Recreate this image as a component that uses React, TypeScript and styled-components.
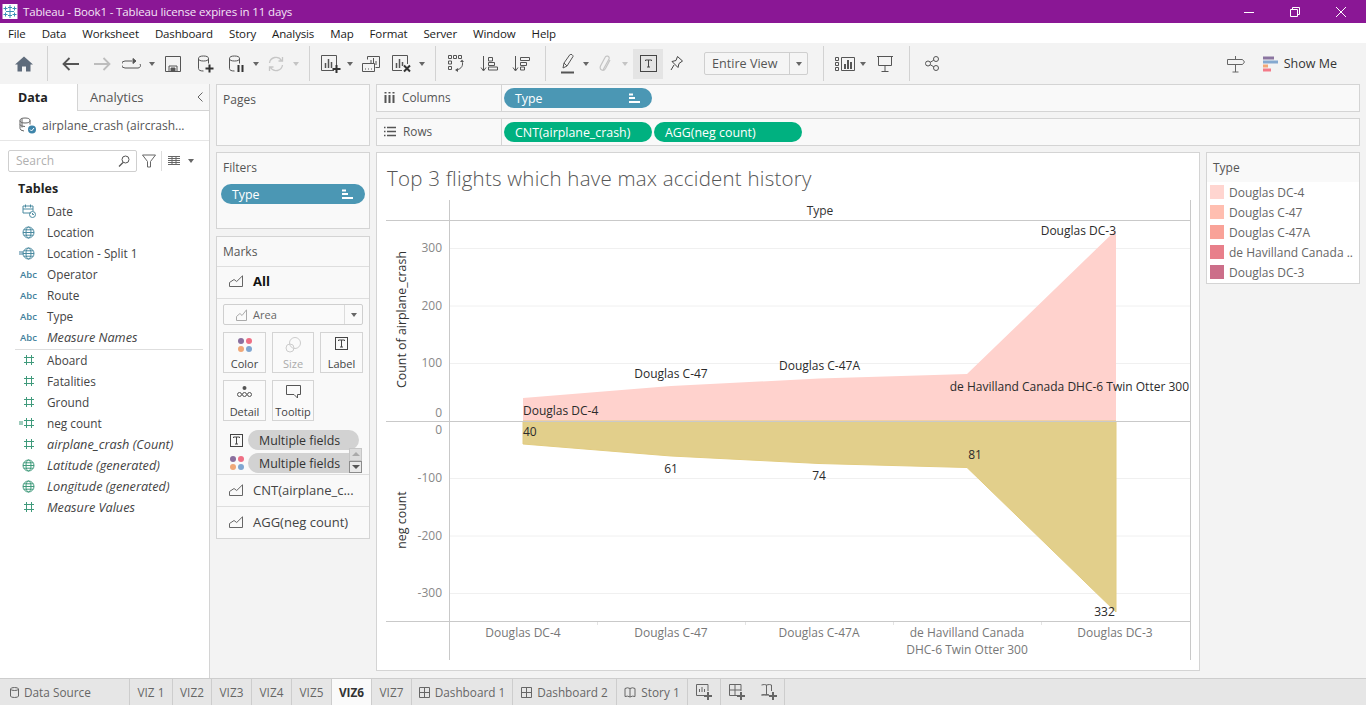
import React from 'react';
import styled, { createGlobalStyle } from 'styled-components';

const FONT = '"Open Sans", "Noto Sans", sans-serif';

const Global = createGlobalStyle`
  html, body { margin: 0; padding: 0; background: #f3f3f3; overflow: hidden; }
  * { box-sizing: border-box; }
  body { font-family: ${FONT}; font-size: 12px; color: #333; }
`;

const Page = styled.div`
  width: 1366px; height: 705px; display: flex; flex-direction: column; overflow: hidden;
`;
const TitleBar = styled.div`
  height: 23px; flex: none; background: #8a1795; color: #f4e6f6; display: flex; align-items: center;
  padding-left: 2px; font-size: 11.5px; letter-spacing: -0.15px;
`;
const TitleText = styled.span` margin-left: 5px; `;
const WinControls = styled.div` margin-left: auto; display: flex; align-items: center; padding-right: 2px; `;
const WinBtn = styled.span`
  width: 46px; height: 23px; display: flex; align-items: center; justify-content: center; color: #fff;
`;
const MenuBar = styled.div`
  height: 20px; flex: none; background: #fff; display: flex; align-items: center; gap: 16px; padding-left: 8px;
  font-size: 11.5px; color: #1a1a1a; letter-spacing: -0.14px;
`;
const Toolbar = styled.div`
  height: 41px; flex: none; background: #f3f3f3; display: flex; align-items: center; padding-left: 8px; padding-right: 29px;
`;
const Tool = styled.span<{ $w: number; $active?: boolean; $ml?: number }>`
  width: ${p => p.$w}px; height: 30px; flex: none; display: flex; align-items: center; justify-content: center;
  margin-left: ${p => p.$ml ?? 0}px; background: ${p => (p.$active ? '#e4e4e4' : 'transparent')};
`;
const Sep = styled.span<{ $l: number; $r: number }>`
  width: 1px; height: 35px; flex: none; background: #d2d2d2; margin: 0 ${p => p.$r}px 0 ${p => p.$l}px;
`;
const Caret = styled.span<{ $light?: boolean }>`
  width: 0; height: 0; border-left: 3.5px solid transparent; border-right: 3.5px solid transparent;
  border-top: 4px solid ${p => (p.$light ? '#c4c4c4' : '#666')};
`;
const FitSelect = styled.div`
  width: 104px; height: 23px; margin-left: 13px; flex: none; display: flex; align-items: center;
  border: 1px solid #cfcfcf; border-radius: 2px; background: #f5f5f5; color: #555; font-size: 12.6px;
`;
const FitLabel = styled.span` flex: 1; padding-left: 7px; white-space: nowrap; `;
const FitArrow = styled.span`
  width: 18px; height: 100%; border-left: 1px solid #cfcfcf; display: flex; align-items: center; justify-content: center;
`;
const ShowMe = styled.div`
  margin-left: 18px; display: flex; align-items: center; gap: 6px; color: #333; font-size: 12.5px;
`;
const Spring = styled.span` margin-left: auto; display: flex; `;

const Main = styled.div` flex: 1; min-height: 0; display: flex; background: #f3f3f3; `;
const DataPane = styled.aside`
  width: 210px; flex: none; background: #fff; border-right: 1px solid #d4d4d4; display: flex; flex-direction: column;
`;
const PaneTabs = styled.div` height: 27px; display: flex; flex: none; `;
const PaneTab = styled.div<{ $active?: boolean }>`
  display: flex; align-items: center; font-size: 13px;
  ${p => p.$active
    ? 'width: 77px; padding-left: 18px; font-weight: 700; font-size: 12.5px; color: #222; background: #fff;'
    : 'flex: 1; padding-left: 12px; color: #555; background: #f7f7f7; border-left: 1px solid #d4d4d4; border-bottom: 1px solid #d4d4d4;'}
`;
const Collapse = styled.span` margin-left: auto; margin-right: 6px; display: flex; `;
const SourceRow = styled.div`
  height: 30px; flex: none; display: flex; align-items: center; padding-left: 19px; gap: 5px; color: #555; font-size: 12px;
  border-bottom: 1px solid #e6e6e6; white-space: nowrap;
`;
const SearchRow = styled.div` height: 21px; margin-top: 9px; padding-left: 8px; display: flex; align-items: center; flex: none; `;
const SearchBox = styled.div`
  width: 129px; height: 22px; border: 1px solid #cfcfcf; border-radius: 2px; display: flex; align-items: center;
  justify-content: space-between; padding: 0 6px 0 7px; color: #b0b0b0; font-size: 12px;
`;
const SearchTool = styled.span<{ $w: number; $border?: boolean }>`
  width: ${p => p.$w}px; height: 20px; display: flex; align-items: center; justify-content: center;
  ${p => (p.$border ? 'border-left: 1px solid #ddd;' : '')}
`;
const TablesHead = styled.div` margin: 9px 0 4px 18px; height: 17px; line-height: 17px; font-weight: 700; font-size: 12.5px; color: #222; `;
const FieldRow = styled.div<{ $italic?: boolean }>`
  height: 21px; display: flex; align-items: center; flex: none; padding: 0 0 1px 18px; color: #444; white-space: nowrap;
  font-size: ${p => (p.$italic ? '12.7px' : '11.8px')};
  font-style: ${p => (p.$italic ? 'italic' : 'normal')};
`;
const FieldIconSlot = styled.span<{ $color: string }>`
  width: 21px; margin-right: 8px; display: flex; align-items: center; justify-content: center; color: ${p => p.$color};
  font-size: 9.5px; font-style: normal; font-weight: 600; position: relative;
`;
const CalcMark = styled.span`
  position: absolute; left: 1px; top: 50%; transform: translateY(-50%); width: 4px; height: 3px;
  border-top: 1px solid currentColor; border-bottom: 1px solid currentColor;
`;
const FieldDivider = styled.div` height: 1px; margin: 1px 6px 0 15px; background: #dedede; flex: none; `;

const CardCol = styled.div` width: 154px; margin-left: 6px; flex: none; display: flex; flex-direction: column; `;
const Card = styled.section<{ $h: number; $mt?: number }>`
  height: ${p => p.$h}px; margin-top: ${p => p.$mt ?? 0}px; background: #f9f9f9; border: 1px solid #d4d4d4; flex: none; position: relative;
`;
const CardTitle = styled.div` height: 29px; line-height: 30px; padding-left: 6px; color: #555; font-size: 12px; `;
const Pill = styled.div<{ $bg: string; $w?: number; $color?: string }>`
  width: ${p => p.$w ?? 148}px; height: 20px; border-radius: 10px; background: ${p => p.$bg}; color: ${p => p.$color ?? '#fff'};
  display: flex; align-items: center; padding: 0 12px 0 11px; font-size: 12.4px; font-weight: 500; flex: none; white-space: nowrap;
`;
const PillSort = styled.span` margin-left: auto; display: flex; `;
const FilterPill = styled.div` margin: 2px 0 0 4px; `;
const MarksRow = styled.div<{ $h: number; $bold?: boolean }>`
  height: ${p => p.$h}px; display: flex; align-items: center; padding: 0 0 ${p => (p.$bold ? 3 : 2)}px 12px; border-top: 1px solid #dedede;
  font-size: 13px; color: ${p => (p.$bold ? '#111' : '#444')}; font-weight: ${p => (p.$bold ? 700 : 400)}; white-space: nowrap;
`;
const MarksRule = styled.div` height: 1px; background: #dedede; `;
const MarkIconSlot = styled.span` width: 24px; display: flex; `;
const MarkSelect = styled.div`
  margin: 5px 6px 0; height: 21px; border: 1px solid #cfcfcf; border-radius: 2px; background: #fafafa; display: flex; align-items: center;
  color: #666; font-size: 11px;
`;
const MarkSelectLabel = styled.span` flex: 1; display: flex; align-items: center; gap: 6px; padding-left: 12px; `;
const MarkSelectArrow = styled.span`
  width: 18px; height: 100%; border-left: 1px solid #dcdcdc; display: flex; align-items: center; justify-content: center;
`;
const MarkGrid = styled.div`
  display: grid; grid-template-columns: 43px 42px 43px; grid-auto-rows: 41px; column-gap: 6px; row-gap: 7px; margin: 7px 6px 0;
`;
const MarkBtn = styled.div<{ $off?: boolean }>`
  border: 1px solid #d4d4d4; background: #fafafa; display: flex; flex-direction: column; align-items: center; justify-content: space-between;
  padding: 4px 0 1px; font-size: 11px; color: ${p => (p.$off ? '#aaa' : '#444')};
`;
const EncList = styled.div` position: relative; height: 44px; margin-top: 9px; overflow: hidden; display: flex; flex-direction: column; gap: 3px; `;
const EncRow = styled.div` display: flex; align-items: center; height: 20px; flex: none; padding-left: 11px; gap: 3px; `;
const EncIcon = styled.span` width: 17px; display: flex; justify-content: center; `;
const Scroller = styled.div`
  position: absolute; right: 7px; top: 18px; width: 13px; height: 25px; display: flex; flex-direction: column;
`;
const ScrollBtn = styled.span<{ $on?: boolean }>`
  flex: 1; display: flex; align-items: center; justify-content: center;
  background: ${p => (p.$on ? '#e9e9e9' : '#dcdcdc')}; border: 1px solid ${p => (p.$on ? '#8c8c8c' : '#c6c6c6')};
`;
const ScrollUp = styled.span`
  width: 0; height: 0; border-left: 4px solid transparent; border-right: 4px solid transparent; border-bottom: 4px solid #aaa;
`;
const ScrollDown = styled.span`
  width: 0; height: 0; border-left: 4px solid transparent; border-right: 4px solid transparent; border-top: 4px solid #555;
`;

const WorkArea = styled.div` flex: 1; margin: 0 6px; display: flex; flex-direction: column; min-width: 0; `;
const Shelf = styled.div<{ $mt?: number }>`
  height: 28px; margin-top: ${p => p.$mt ?? 0}px; flex: none; display: flex; background: #f9f9f9; border: 1px solid #d4d4d4;
`;
const ShelfLabel = styled.div`
  width: 125px; flex: none; display: flex; align-items: center; gap: 7px; padding: 0 0 2px 7px; border-right: 1px solid #d4d4d4;
  color: #555; font-size: 11.8px;
`;
const ShelfPills = styled.div` display: flex; align-items: center; gap: 2px; padding-left: 2px; `;
const ViewRow = styled.div` display: flex; gap: 6px; margin-top: 6px; `;
const VizPanel = styled.section`
  width: 824px; height: 519px; flex: none; background: #fff; border: 1px solid #d4d4d4; display: flex; flex-direction: column;
`;
const VizTitle = styled.h1`
  margin: 0; height: 37px; flex: none; padding: 12px 0 0 10px; font-weight: 300; font-size: 20.5px; letter-spacing: 0.22px; line-height: 26px; color: #555; white-space: nowrap;
`;
const ChartSvg = styled.svg` display: block; flex: none; `;
const Legend = styled.section`
  width: 154px; height: 132px; flex: none; border: 1px solid #d4d4d4; background: #fff;
`;
const LegendHead = styled.div` height: 29px; background: #f9f9f9; line-height: 30px; padding-left: 6px; color: #555; font-size: 12px; `;
const LegendRow = styled.div` height: 20px; display: flex; align-items: center; padding-left: 3px; color: #666; font-size: 12px; gap: 5px; white-space: nowrap; overflow: hidden; `;
const Swatch = styled.span<{ $c: string }>` width: 14px; height: 14px; flex: none; background: ${p => p.$c}; `;

const TabBar = styled.div`
  height: 27px; flex: none; background: #e6e6e6; border-top: 1px solid #cdcdcd; display: flex; align-items: stretch;
`;
const SheetTab = styled.div<{ $w: number; $active?: boolean; $noBorder?: boolean; $left?: boolean }>`
  width: ${p => p.$w}px; flex: none; display: flex; align-items: center; gap: 5px; font-size: 11.8px; white-space: nowrap;
  justify-content: ${p => (p.$left ? 'flex-start' : 'center')}; padding-left: ${p => (p.$left ? '10px' : '0')};
  border-right: ${p => (p.$noBorder ? 'none' : '1px solid #cdcdcd')};
  background: ${p => (p.$active ? '#fafafa' : 'transparent')}; color: ${p => (p.$active ? '#333' : '#666')};
  font-weight: ${p => (p.$active ? 700 : 400)};
`;

const AxisText = styled.text<{ $c?: string; $size?: number }>`
  font-family: ${FONT}; font-size: ${p => p.$size ?? 12}px; fill: ${p => p.$c ?? '#888'};
`;
const MarkText = styled.text`
  font-family: ${FONT}; font-size: 12px; fill: #2b2b2b;
`;

type SvgP = { w: number; h: number; children: React.ReactNode; color?: string };
const Ico = ({ w, h, children, color = '#555' }: SvgP) => (
  <svg width={w} height={h} viewBox={`0 0 ${w} ${h}`} fill="none" stroke={color} strokeWidth="1" style={{ display: 'block', flex: 'none' }}>
    {children}
  </svg>
);
const Plus = ({ x, y, c = '#333' }: { x: number; y: number; c?: string }) => (
  <path d={`M${x - 4} ${y}h8M${x} ${y - 4}v8`} stroke={c} strokeWidth="2" />
);
const Cyl = () => (
  <>
    <ellipse cx="6.5" cy="3.5" rx="5" ry="2.5" />
    <path d="M1.5 3.5v10q0 2.500 5 2.500M11.500 3.500v5" />
  </>
);

const LogoIcon = () => (
  <svg width="16" height="15" viewBox="0 0 15 15" style={{ display: 'block' }}>
    <rect width="15" height="15" fill="#fff" />
    <g stroke="#3a8fb5" strokeWidth="1">
      <path d="M7.500 1v13M3.500 7.500h8M5.500 3.500h4M5.500 11.500h4M1 4.500h4M10 4.500h4M1 10.500h4M10 10.500h4M3 2.500v4M12 2.500v4M3 8.500v4M12 8.500v4" />
    </g>
  </svg>
);
const AreaIcon = ({ c = '#666', w = 14 }: { c?: string; w?: number }) => (
  <Ico w={w} h={12} color={c}><path d={`M0.500 11.500V7.500L${w * 0.36} 4.500L${w * 0.55} 6.500L${w - 0.5} 0.800V11.500Z`} /></Ico>
);
const Hash = () => (
  <Ico w={12} h={12} color="#3f9a7b"><path d="M3.500 1v10M8.500 1v10M1 3.500h10M1 8.500h10" /></Ico>
);
const Globe = ({ c = '#4a8aa0' }: { c?: string }) => (
  <Ico w={13} h={13} color={c}>
    <circle cx="6.500" cy="6.500" r="5.500" />
    <ellipse cx="6.500" cy="6.500" rx="2.500" ry="5.500" />
    <path d="M1 6.500h11M1.800 3.800h9.400M1.800 9.200h9.400" />
  </Ico>
);
const SortBars = () => (
  <Ico w={11} h={10} color="#fff"><path d="M0 1.500h4M0 5h6" strokeWidth="2" /><path d="M0 9h11" strokeWidth="2" /></Ico>
);
const ColorDots = () => (
  <Ico w={16} h={16} color="none">
    <circle cx="4" cy="4" r="3" fill="#8a6f9e" /><circle cx="12" cy="4" r="3" fill="#ef6f84" />
    <circle cx="4" cy="12" r="3" fill="#f0a878" /><circle cx="12" cy="12" r="3" fill="#7fa6d1" />
  </Ico>
);
const TBox = ({ s = 14 }: { s?: number }) => (
  <Ico w={s} h={s} color="#444">
    <rect x="0.500" y="0.500" width={s - 1} height={s - 1} />
    <path d={`M${s / 2 - 3} ${s / 2 - 2.500}v-1h6v1M${s / 2} ${s / 2 - 3.500}v7M${s / 2 - 1.500} ${s / 2 + 3.500}h3`} />
  </Ico>
);

const fieldsA: [string, string][] = [['Date', 'date'], ['Location', 'globe'], ['Location - Split 1', 'globeCalc'], ['Operator', 'abc'], ['Route', 'abc'], ['Type', 'abc'], ['Measure Names', 'abcI']];
const fieldsB: [string, string][] = [['Aboard', 'hash'], ['Fatalities', 'hash'], ['Ground', 'hash'], ['neg count', 'hashCalc'], ['airplane_crash (Count)', 'hashI'], ['Latitude (generated)', 'globeI'], ['Longitude (generated)', 'globeI'], ['Measure Values', 'hashI']];

const FieldLine = ({ name, kind }: { name: string; kind: string }) => {
  const italic = kind.endsWith('I');
  const green = kind.startsWith('hash') || kind === 'globeI';
  const calc = kind.endsWith('Calc');
  let icon: React.ReactNode = 'Abc';
  if (kind === 'date') icon = (
    <Ico w={14} h={14} color="#4a8aa0">
      <path d="M9 9H1V2h10v5M1 5h10M3.500 0.500v3M8.500 0.500v3" /><circle cx="10.500" cy="10.500" r="3" /><path d="M10.500 9v1.500h1.500" />
    </Ico>
  );
  if (kind.startsWith('globe')) icon = <Globe c={green ? '#3f9a7b' : '#4a8aa0'} />;
  if (kind.startsWith('hash')) icon = <Hash />;
  return (
    <FieldRow $italic={italic}>
      <FieldIconSlot $color={green ? '#3f9a7b' : '#3f7f9c'}>{calc && <CalcMark />}{icon}</FieldIconSlot>
      {name}
    </FieldRow>
  );
};

const ticks: [string, number][] = [['300', 248], ['200', 306], ['100', 363], ['0', 412.5], ['0', 430], ['-100', 478], ['-200', 536], ['-300', 593]];
const grid = [248.5, 306, 363.5, 478.5, 536, 593.5];

const Chart = () => (
  <ChartSvg width={822} height={480} viewBox="377 190 822 480">
    {grid.map(y => <line key={y} x1={450} x2={1190} y1={y} y2={y} stroke="#f0f0f0" />)}
    <polygon points="523,398 671,386 819,378.500 967,374 1116,230 1116,421 523,421" fill="#ffd2cd" />
    <polygon points="523,421 1116,421 1116,612 967,467.500 819,463.500 671,456 523,444" fill="#e2cf8b" stroke="#e2cc80" />
    <path d="M386 220.500H1190.500M386 421.500H1190.500M386 621.500H1190.500M449.500 200V660M1190.500 200V660" stroke="#c9c9c9" />
    <path d="M597.500 622v3M745.500 622v3M893.500 622v3M1041.500 622v3" stroke="#e4e4e4" />
    <AxisText x={820} y={215} textAnchor="middle" $c="#333">Type</AxisText>
    {ticks.map(([t, y], i) => <AxisText key={i} x={442} y={y + 4} textAnchor="end">{t}</AxisText>)}
    <AxisText x={0} y={0} transform="translate(406 319.500) rotate(-90)" textAnchor="middle" $c="#333" $size={12.4}>Count of airplane_crash</AxisText>
    <AxisText x={0} y={0} transform="translate(406 520) rotate(-90)" textAnchor="middle" $c="#333" $size={12.4}>neg count</AxisText>
    <AxisText x={523} y={637} textAnchor="middle" $c="#777">Douglas DC-4</AxisText>
    <AxisText x={671} y={637} textAnchor="middle" $c="#777">Douglas C-47</AxisText>
    <AxisText x={819} y={637} textAnchor="middle" $c="#777">Douglas C-47A</AxisText>
    <AxisText x={967} y={637} textAnchor="middle" $c="#777">de Havilland Canada</AxisText>
    <AxisText x={967} y={654} textAnchor="middle" $c="#777">DHC-6 Twin Otter 300</AxisText>
    <AxisText x={1115} y={637} textAnchor="middle" $c="#777">Douglas DC-3</AxisText>
    <MarkText x={1116} y={235} textAnchor="end">Douglas DC-3</MarkText>
    <MarkText x={671} y={378} textAnchor="middle">Douglas C-47</MarkText>
    <MarkText x={819.500} y={370} textAnchor="middle">Douglas C-47A</MarkText>
    <MarkText x={1189} y={391} textAnchor="end">de Havilland Canada DHC-6 Twin Otter 300</MarkText>
    <MarkText x={523} y={415}>Douglas DC-4</MarkText>
    <MarkText x={523} y={436}>40</MarkText>
    <MarkText x={671} y={473} textAnchor="middle">61</MarkText>
    <MarkText x={819} y={480} textAnchor="middle">74</MarkText>
    <MarkText x={975} y={459} textAnchor="middle">81</MarkText>
    <MarkText x={1104.500} y={616} textAnchor="middle">332</MarkText>
  </ChartSvg>
);

const legend: [string, string][] = [['#ffd5d0', 'Douglas DC-4'], ['#ffbeb0', 'Douglas C-47'], ['#f9a298', 'Douglas C-47A'], ['#e87f8a', 'de Havilland Canada ..'], ['#cc6e89', 'Douglas DC-3']];

export default function App() {
  return (
    <Page>
      <Global />
      <TitleBar>
        <LogoIcon />
        <TitleText>Tableau - Book1 - Tableau license expires in 11 days</TitleText>
        <WinControls>
          <WinBtn><Ico w={10} h={10} color="#fff"><path d="M0 5.500h10" /></Ico></WinBtn>
          <WinBtn><Ico w={10} h={10} color="#fff"><path d="M0.500 2.500h7v7h-7zM2.500 2.500v-2h7v7h-2" /></Ico></WinBtn>
          <WinBtn><Ico w={10} h={10} color="#fff"><path d="M0 0l10 10M10 0L0 10" /></Ico></WinBtn>
        </WinControls>
      </TitleBar>
      <MenuBar>
        {['File', 'Data', 'Worksheet', 'Dashboard', 'Story', 'Analysis', 'Map', 'Format', 'Server', 'Window', 'Help'].map(m => <span key={m}>{m}</span>)}
      </MenuBar>
      <Toolbar>
        <Tool $w={32}><Ico w={18} h={16} color="none"><path d="M9 0.500L18 8.500H15.500V15.500H11V10.500H7V15.500H2.500V8.500H0Z" fill="#5e6b7b" /></Ico></Tool>
        <Sep $l={7} $r={7} />
        <Tool $w={30}><Ico w={17} h={14} color="#555"><path d="M17 7H1.500M7.500 1L1.500 7L7.500 13" strokeWidth="1.800" /></Ico></Tool>
        <Tool $w={34}><Ico w={17} h={14} color="#bdbdbd"><path d="M0 7H15.500M9.500 1L15.500 7L9.500 13" strokeWidth="1.800" /></Ico></Tool>
        <Tool $w={24}><Ico w={19} h={12} color="#555"><path d="M10 3H3a2.500 2.500 0 0 0 0 7h13a2.500 2.500 0 0 0 2-4" /><path d="M11 0.500l3 2.500l-3 2.500z" fill="#555" /></Ico></Tool>
        <Tool $w={18}><Caret /></Tool>
        <Tool $w={24}><Ico w={16} h={16} color="#555"><path d="M0.500 0.500h15v15h-15zM4 15v-5h8v5" /><path d="M6 12h4v3H6z" fill="#555" /></Ico></Tool>
        <Tool $w={40}><Ico w={17} h={18}><Cyl /><Plus x={12.500} y={13.500} /></Ico></Tool>
        <Tool $w={22}><Ico w={17} h={18}><Cyl /><path d="M10.500 10v7M14.500 10v7" stroke="#333" strokeWidth="2" /></Ico></Tool>
        <Tool $w={18}><Caret /></Tool>
        <Tool $w={22}><Ico w={16} h={16} color="#c6c6c6"><path d="M1.500 7a6.500 6.500 0 0 1 12-2.500M14.500 9a6.500 6.500 0 0 1-12 2.500M10.500 5h4v-4M5.500 11h-4v4" strokeWidth="1.300" /></Ico></Tool>
        <Tool $w={18}><Caret $light /></Tool>
        <Sep $l={4} $r={8} />
        <Tool $w={26}><Ico w={20} h={18}><path d="M13 15.500H0.500V0.500H15.500V10" /><path d="M4.500 13V8M7.500 13V4M10.500 13V7" strokeWidth="1.500" /><Plus x={15.500} y={14} /></Ico></Tool>
        <Tool $w={12}><Caret /></Tool>
        <Tool $w={30}><Ico w={18} h={16}><path d="M5.500 3.500v-3h12v11h-4M0.500 7.500h12v8h-12zM9 7v-3M11.500 7v-5M14 9v-4M3 13h1M6 13h1M9 13h1" /></Ico></Tool>
        <Tool $w={32}><Ico w={20} h={18}><path d="M10 15.500H0.500V0.500H15.500V9" /><path d="M4.500 13V8M7.500 13V4M10.500 11V7" strokeWidth="1.500" /><path d="M12 10.500l6 6M18 10.500l-6 6" stroke="#333" strokeWidth="2" /></Ico></Tool>
        <Tool $w={8}><Caret /></Tool>
        <Sep $l={9} $r={4} />
        <Tool $w={34}><Ico w={18} h={17}><path d="M0.500 0.500h3v3h-3zM5.500 0.500h3v3h-3zM10.500 0.500h3v3h-3zM0.500 6h3v3h-3zM0.500 11.500h3v3h-3zM14 6c1.500 4 0 8-6 9" /><path d="M12 7l2-2.500l2 2.500M10 13l-3 2l3 2" fill="#555" stroke="none" /></Ico></Tool>
        <Tool $w={30}><Ico w={18} h={16}><path d="M3.500 0v14M1 11.500l2.500 3.500l2.500-3.500" /><path d="M8.500 1.500h4v3.500h-4zM8.500 6.500h6v3h-6zM8.500 11h9v3h-9z" /></Ico></Tool>
        <Tool $w={34}><Ico w={18} h={16}><path d="M3.500 0v14M1 11.500l2.500 3.500l2.500-3.500" /><path d="M8.500 1.500h9v3h-9zM8.500 6.500h6v3h-6zM8.500 11h4v3h-4z" /></Ico></Tool>
        <Sep $l={7} $r={6} />
        <Tool $w={31}><Ico w={14} h={20}><path d="M2 14l1-5l6-8.500c1-1 3.500 1 3 2L6 12zM3 9l3 3" /><path d="M0 18.500h13" strokeWidth="2" /></Ico></Tool>
        <Tool $w={6}><Caret /></Tool>
        <Tool $w={32}><Ico w={14} h={18} color="#c4c4c4"><path d="M5 15L11 4c1-3-3-4-4-1.500L2.500 11c-1.500 4 3 6 5 2.500l4.500-8.500" strokeWidth="1.200" /></Ico></Tool>
        <Tool $w={8}><Caret $light /></Tool>
        <Tool $w={30} $active $ml={4}><TBox s={17} /></Tool>
        <Tool $w={28}><Ico w={14} h={17} color="#444"><path d="M7.500 1.500L12.500 6L9 8.500L8 12.500L2 6.500L6 5.500ZM4 10L1 15" /></Ico></Tool>
        <FitSelect><FitLabel>Entire View</FitLabel><FitArrow><Caret /></FitArrow></FitSelect>
        <Sep $l={15} $r={8} />
        <Tool $w={26}><Ico w={20} h={14}><path d="M0.500 0.500h3v3h-3zM0.500 5.500h3v3h-3zM0.500 10.500h3v3h-3zM6.500 0.500h13v13h-13z" /><path d="M10 12V7M13 12V3M16 12V5" strokeWidth="2" /></Ico></Tool>
        <Tool $w={10}><Caret /></Tool>
        <Tool $w={34}><Ico w={16} h={16}><path d="M0 0.500h16M1.500 0.500v9h13v-9M8 9.500v5.500M4.500 15.500h7" /></Ico></Tool>
        <Sep $l={7} $r={6} />
        <Tool $w={32}><Ico w={14} h={15}><circle cx="3" cy="7.500" r="2.500" /><circle cx="11" cy="3" r="2.500" /><circle cx="11" cy="12" r="2.500" /><path d="M5.200 6.300L8.800 4.200M5.200 8.700L8.800 10.800" /></Ico></Tool>
        <Spring>
          <Ico w={18} h={18} color="#666"><path d="M0.500 4.500H15.500L17.500 7L15.500 9.500H0.500ZM8.500 1V4.500M8.500 9.500V17M5.500 17H11.500" /></Ico>
        </Spring>
        <ShowMe>
          <Ico w={15} h={16} color="none"><path d="M0 2h11" stroke="#8b75a0" strokeWidth="3" /><path d="M0 6h15" stroke="#85a9d0" strokeWidth="3" /><path d="M0 10h5" stroke="#f2a878" strokeWidth="3" /><path d="M0 14h8" stroke="#f47a88" strokeWidth="3" /></Ico>
          Show Me
        </ShowMe>
      </Toolbar>
      <Main>
        <DataPane>
          <PaneTabs>
            <PaneTab $active>Data</PaneTab>
            <PaneTab>Analytics<Collapse><Ico w={6} h={10} color="#666"><path d="M5.500 0.500L1 5L5.500 9.500" /></Ico></Collapse></PaneTab>
          </PaneTabs>
          <SourceRow>
            <Ico w={18} h={17} color="#666"><ellipse cx="6" cy="3.500" rx="5" ry="2.500" /><path d="M1 3.500v8q0 2 4 2.500M11 3.500v4M1 7.500q0 2 5 2M3 1.500v9" /><circle cx="13" cy="12.500" r="4" fill="#3e85aa" stroke="none" /><path d="M11 12.500l1.500 1.500l2.500-3" stroke="#fff" /></Ico>
            airplane_crash (aircrash...
          </SourceRow>
          <SearchRow>
            <SearchBox>Search<Ico w={12} h={12} color="#555"><circle cx="7.500" cy="4.500" r="3.500" /><path d="M5 7.500L1 11.500" strokeWidth="1.300" /></Ico></SearchBox>
            <SearchTool $w={24}><Ico w={14} h={14} color="#666"><path d="M0.500 1h13L8.500 7.500V13H5.500V7.500Z" /></Ico></SearchTool>
            <SearchTool $w={24} $border><Ico w={12} h={9} color="#666"><path d="M0 .5h12M0 2.500h12M0 4.500h12M0 6.500h12M0 8.500h12M4 0v9M8 0v9" /></Ico></SearchTool>
            <SearchTool $w={12}><Caret /></SearchTool>
          </SearchRow>
          <TablesHead>Tables</TablesHead>
          {fieldsA.map(([n, k]) => <FieldLine key={n} name={n} kind={k} />)}
          <FieldDivider />
          {fieldsB.map(([n, k]) => <FieldLine key={n} name={n} kind={k} />)}
        </DataPane>
        <CardCol>
          <Card $h={62}><CardTitle>Pages</CardTitle></Card>
          <Card $h={77} $mt={6}>
            <CardTitle>Filters</CardTitle>
            <FilterPill><Pill $bg="#4b97b4" $w={144}>Type<PillSort><SortBars /></PillSort></Pill></FilterPill>
          </Card>
          <Card $h={303} $mt={7}>
            <CardTitle>Marks</CardTitle>
            <MarksRow $h={32} $bold><MarkIconSlot><AreaIcon /></MarkIconSlot>All</MarksRow>
            <MarksRule />
            <MarkSelect>
              <MarkSelectLabel><AreaIcon c="#aaa" w={11} />Area</MarkSelectLabel>
              <MarkSelectArrow><Caret /></MarkSelectArrow>
            </MarkSelect>
            <MarkGrid>
              <MarkBtn><ColorDots />Color</MarkBtn>
              <MarkBtn $off><Ico w={16} h={16} color="#ccc"><circle cx="5" cy="11" r="4" /><circle cx="10" cy="6" r="5.500" /></Ico>Size</MarkBtn>
              <MarkBtn><TBox s={13} />Label</MarkBtn>
              <MarkBtn><Ico w={15} h={12} color="#555"><circle cx="7.500" cy="3" r="2" fill="#555" stroke="none" /><circle cx="2.500" cy="9.500" r="2" /><circle cx="7.500" cy="9.500" r="2" /><circle cx="12.500" cy="9.500" r="2" /></Ico>Detail</MarkBtn>
              <MarkBtn><Ico w={15} h={14} color="#555"><path d="M0.500 0.500h14v9h-3v3.500l-3.500-3.500h-7.500z" /></Ico>Tooltip</MarkBtn>
            </MarkGrid>
            <EncList>
              <EncRow><EncIcon><TBox s={13} /></EncIcon><Pill $bg="#d2d2d2" $w={111} $color="#333">Multiple fields</Pill></EncRow>
              <EncRow><EncIcon><ColorDots /></EncIcon><Pill $bg="#d2d2d2" $w={111} $color="#333">Multiple fields</Pill></EncRow>
              <Scroller>
                <ScrollBtn><ScrollUp /></ScrollBtn>
                <ScrollBtn $on><ScrollDown /></ScrollBtn>
              </Scroller>
            </EncList>
            <MarksRow $h={32}><MarkIconSlot><AreaIcon /></MarkIconSlot>CNT(airplane_c...</MarksRow>
            <MarksRow $h={32}><MarkIconSlot><AreaIcon /></MarkIconSlot>AGG(neg count)</MarksRow>
          </Card>
        </CardCol>
        <WorkArea>
          <Shelf>
            <ShelfLabel><Ico w={11} h={11} color="#555"><path d="M1.500 3v8M5.500 3v8M9.500 3v8M1.500 0v1.500M5.500 0v1.500M9.500 0v1.500" strokeWidth="2" /></Ico>Columns</ShelfLabel>
            <ShelfPills><Pill $bg="#4b97b4">Type<PillSort><SortBars /></PillSort></Pill></ShelfPills>
          </Shelf>
          <Shelf $mt={6}>
            <ShelfLabel><Ico w={12} h={11} color="#555"><path d="M0 1.500h1.500M3 1.500h9M0 5.500h1.500M3 5.500h9M0 9.500h1.500M3 9.500h9" strokeWidth="1.600" /></Ico>Rows</ShelfLabel>
            <ShelfPills>
              <Pill $bg="#00b180">CNT(airplane_crash)</Pill>
              <Pill $bg="#00b180">AGG(neg count)</Pill>
            </ShelfPills>
          </Shelf>
          <ViewRow>
            <VizPanel>
              <VizTitle>Top 3 flights which have max accident history</VizTitle>
              <Chart />
            </VizPanel>
            <Legend>
              <LegendHead>Type</LegendHead>
              {legend.map(([c, t]) => <LegendRow key={t}><Swatch $c={c} />{t}</LegendRow>)}
            </Legend>
          </ViewRow>
        </WorkArea>
      </Main>
      <TabBar>
        <SheetTab $w={130} $left><Ico w={9} h={11} color="#666"><path d="M0.500 2v7q0 1.500 4 1.500t4-1.500V2q0-1.500-4-1.500t-4 1.500zq0 1.500 4 1.500t4-1.500" /></Ico>Data Source</SheetTab>
        <SheetTab $w={43}>VIZ 1</SheetTab>
        <SheetTab $w={39}>VIZ2</SheetTab>
        <SheetTab $w={40}>VIZ3</SheetTab>
        <SheetTab $w={40}>VIZ4</SheetTab>
        <SheetTab $w={40}>VIZ5</SheetTab>
        <SheetTab $w={40} $active>VIZ6</SheetTab>
        <SheetTab $w={40}>VIZ7</SheetTab>
        <SheetTab $w={101}><Ico w={11} h={11} color="#666"><path d="M0.500 0.500h10v10h-10zM5.500 0.500v10M0.500 5.500h10" /></Ico>Dashboard 1</SheetTab>
        <SheetTab $w={104}><Ico w={11} h={11} color="#666"><path d="M0.500 0.500h10v10h-10zM5.500 0.500v10M0.500 5.500h10" /></Ico>Dashboard 2</SheetTab>
        <SheetTab $w={71}><Ico w={12} h={11} color="#666"><path d="M1 1.500q2.500-1.500 5 0q2.500-1.500 5 0v8q-2.500-1-5 .5q-2.500-1.500-5-.5zM6 1.500v8.500" /></Ico>Story 1</SheetTab>
        <SheetTab $w={33}><Ico w={16} h={16} color="#666"><path d="M8 11.500H0.500V0.500H12V7" /><path d="M3.500 8V5M6 8V3M8.500 8V5" /><Plus x={12} y={12} c="#666" /></Ico></SheetTab>
        <SheetTab $w={32} $noBorder><Ico w={16} h={16} color="#666"><path d="M8 11.500H0.500V0.500H12V7M6 .5V11M.5 6H12" /><Plus x={12} y={12} c="#666" /></Ico></SheetTab>
        <SheetTab $w={32}><Ico w={16} h={16} color="#666"><path d="M0.500 1q3-1 5 0q3-1 5 0v6M8 11q-3-1-2.500 0q-2-1-5 0zM5.500 1v10" /><Plus x={12} y={12} c="#666" /></Ico></SheetTab>
      </TabBar>
    </Page>
  );
}
